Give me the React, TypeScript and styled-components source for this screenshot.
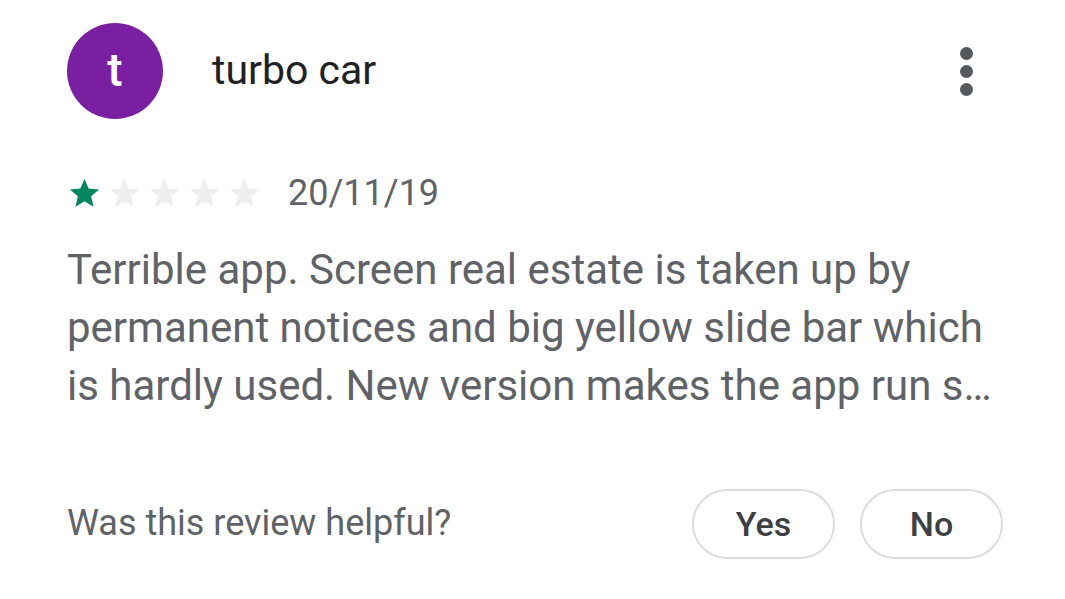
import React from "react";
import styled, { createGlobalStyle } from "styled-components";

const Global = createGlobalStyle`
  html, body { margin: 0; padding: 0; background: #ffffff; }
  body { font-family: Roboto, "Noto Sans", Arial, sans-serif; }
`;

const Card = styled.div`
  width: 1065px;
  height: 599px;
  box-sizing: border-box;
  padding: 23px 62px 0 67px;
  display: flex;
  flex-direction: column;
  background: #fff;
`;

const Header = styled.div`
  display: flex;
  align-items: center;
  height: 96px;
`;

const Avatar = styled.div`
  width: 96px;
  height: 96px;
  border-radius: 50%;
  background: #7b1fa2;
  color: #fff;
  display: flex;
  align-items: center;
  justify-content: center;
  font-size: 46px;
  font-weight: 500;
  line-height: 1;
  flex-shrink: 0;
  padding-bottom: 2px;
  box-sizing: border-box;
`;

const Name = styled.div`
  margin-left: 49px;
  font-size: 41px;
  color: #202124;
  flex: 1;
  padding-bottom: 2px;
`;

const MenuButton = styled.div`
  display: flex;
  flex-direction: column;
  gap: 5px;
  margin-right: 30px;
  align-self: center;
`;

const Dot = styled.span`
  width: 13px;
  height: 13px;
  border-radius: 50%;
  background: #55585c;
`;

const RatingRow = styled.div`
  margin-top: 54px;
  height: 40px;
  display: flex;
  align-items: center;
`;

const Stars = styled.div`
  display: flex;
  gap: 5px;
`;

const DateText = styled.div`
  margin-left: 26px;
  font-size: 36px;
  color: #5f6368;
  line-height: 40px;
`;

const Body = styled.p`
  margin: 28px 0 0 0;
  font-size: 42px;
  line-height: 58px;
  color: #5f6368;
`;

const Footer = styled.div`
  margin-top: 74px;
  display: flex;
  align-items: center;
`;

const Question = styled.div`
  flex: 1;
  font-size: 36px;
  color: #5f6368;
  padding-bottom: 2px;
`;

const Pill = styled.button`
  width: 143px;
  height: 70px;
  border-radius: 35px;
  border: 2px solid #dadce0;
  background: #fff;
  color: #3c4043;
  font-family: Roboto, "Noto Sans", Arial, sans-serif;
  font-size: 34px;
  font-weight: 500;
  display: flex;
  align-items: center;
  justify-content: center;
  padding: 0;
  & + & { margin-left: 25px; }
`;

const Star: React.FC<{ filled: boolean }> = ({ filled }) => (
  <svg width="35" height="35" viewBox="0 0 24 24">
    <path
      d="M12 17.27L18.18 21l-1.64-7.03L22 9.24l-7.19-.61L12 2 9.19 8.63 2 9.24l5.46 4.73L5.82 21z"
      fill={filled ? "#01875f" : "#eceef0"}
    />
  </svg>
);

export default function App() {
  return (
    <>
      <Global />
      <Card>
        <Header>
          <Avatar>t</Avatar>
          <Name>turbo car</Name>
          <MenuButton>
            <Dot />
            <Dot />
            <Dot />
          </MenuButton>
        </Header>
        <RatingRow>
          <Stars>
            {[0, 1, 2, 3, 4].map((i) => (
              <Star key={i} filled={i < 1} />
            ))}
          </Stars>
          <DateText>20/11/19</DateText>
        </RatingRow>
        <Body>
          Terrible app. Screen real estate is taken up by permanent notices and big yellow slide bar which is hardly used. New version makes the app run s…
        </Body>
        <Footer>
          <Question>Was this review helpful?</Question>
          <Pill>Yes</Pill>
          <Pill>No</Pill>
        </Footer>
      </Card>
    </>
  );
}
